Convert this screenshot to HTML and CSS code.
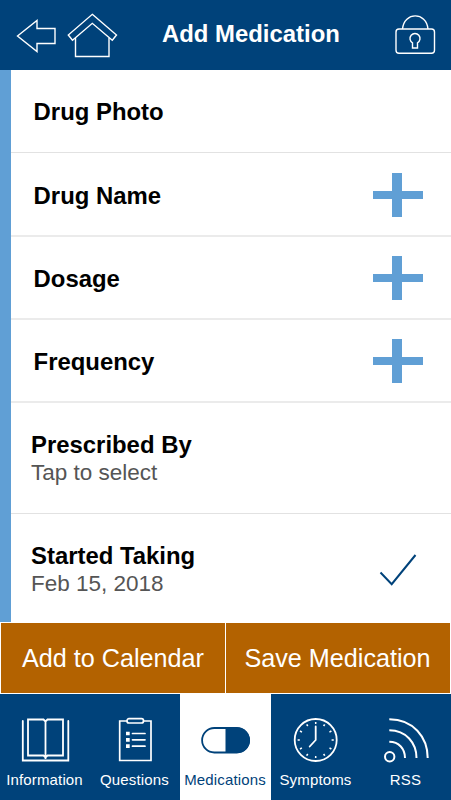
FILE: index.html
```
<!DOCTYPE html>
<html lang="en">
<head>
<meta charset="utf-8">
<title>Add Medication</title>
<link rel="stylesheet" href="styles.css">
</head>
<body>
<div class="app">
  <header class="header">
    <svg class="nav-icons" width="110" height="50" viewBox="14 10 110 50" fill="none" stroke="#fff" stroke-width="1.4">
      <path d="M17.5 36 37 20.5V28.500H55V43.500H37V51.500Z"/>
      <path d="M92.300 14.300 116.500 35 112.300 40.300 92.300 23.300 72.500 40.300 68.300 35Z"/>
      <path d="M75.500 38V56.500H109V38"/>
    </svg>
    <h1 class="title">Add Medication</h1>
    <svg class="lock" width="44" height="42" viewBox="393 13 44 42" fill="none" stroke="#fff" stroke-width="1.4">
      <rect x="396" y="29" width="38.500" height="24.300" rx="3"/>
      <path d="M402.500 29C404 11.500 426.500 11.500 428 29"/>
      <path d="M412.500 42.800A5 5 0 1 1 417.500 42.800V48H412.500Z"/>
    </svg>
  </header>
  <main class="list">
    <section class="row thin"><h2>Drug Photo</h2></section>
    <section class="row"><h2>Drug Name</h2><i class="plus"></i></section>
    <section class="row"><h2>Dosage</h2><i class="plus"></i></section>
    <section class="row"><h2>Frequency</h2><i class="plus"></i></section>
    <section class="row tall"><div><h2>Prescribed By</h2><p>Tap to select</p></div></section>
    <section class="row tall last"><div><h2>Started Taking</h2><p>Feb 15, 2018</p></div>
      <svg class="check" width="38" height="36" viewBox="379 551 38 36" fill="none" stroke="#00427a" stroke-width="2"><path d="M380.500 572.500 391.700 584.200 415.500 555"/></svg>
    </section>
  </main>
  <div class="actions"><button>Add to Calendar</button><button class="save">Save Medication</button></div>
  <nav class="tabs">
    <a class="tab">
      <svg width="50" height="48" viewBox="0 0 50 48" fill="none" stroke="#fff" stroke-width="1.800">
        <path d="M2.800 4V43.500H48.300V4" stroke-linecap="round"/>
        <path d="M25.500 4.500 23.500 2.500H8V38.500H23.500L25.500 40.500 27.500 38.500H43V2.500H27.500ZM25.500 4.500V42"/>
      </svg><span>Information</span>
    </a>
    <a class="tab">
      <svg width="50" height="48" viewBox="0 0 50 48" fill="none" stroke="#fff" stroke-width="1.700">
        <path d="M17 4H9.700V43.500H41V4H33"/><rect x="17" y="1.700" width="16.500" height="4.300" rx="2"/>
        <path d="M22.500 16.500H35M22.500 22.800H35M22.500 29.200H35" stroke-linecap="round"/>
        <path d="M16 16.500H19.700M16 22.800H19.700M16 29.200H19.700" stroke-width="3.700"/>
      </svg><span>Questions</span>
    </a>
    <a class="tab active">
      <svg width="50" height="48" viewBox="0 0 50 48" fill="#00427a">
        <rect x="1.100" y="11" width="47" height="24.500" rx="12.250" fill="#fff" stroke="#00427a" stroke-width="1.800"/><path d="M24.500 10.500H36.200A12.750 12.750 0 0 1 36.200 36H24.500Z"/>
      </svg><span>Medications</span>
    </a>
    <a class="tab">
      <svg width="50" height="48" viewBox="0 0 50 48" fill="none" stroke="#fff" stroke-width="1.800">
        <circle cx="24.700" cy="23" r="21"/>
        <path d="M24.700 9.500V23L18.700 29.500" stroke-linecap="round"/>
        <circle cx="24.700" cy="23" r="17" pathLength="120" stroke-width="2.200" stroke-dasharray="1.800 8.200" stroke-dashoffset=".9"/>
      </svg><span>Symptoms</span>
    </a>
    <a class="tab">
      <svg width="50" height="48" viewBox="0 0 50 48" fill="none" stroke="#fff" stroke-width="2">
        <circle cx="8.700" cy="39.700" r="4.700"/>
        <path d="M8.300 24.700C18 24.700 24 32 24 41M8.300 13.300C25 13.300 35.500 26 35.500 41M8.300 2.200C32 2.200 46.700 20 46.700 41"/>
      </svg><span>RSS</span>
    </a>
  </nav>
</div>
</body>
</html>
```
FILE: styles.css
```
* { box-sizing: border-box; }
body { margin: 0; font-family: "Liberation Sans", Arial, sans-serif; background: #fff; }
h1, h2, p { margin: 0; }
.app { width: 451px; height: 800px; display: flex; flex-direction: column; overflow: hidden; }
.header { height: 70px; background: #00427a; display: flex; align-items: flex-start; padding: 10px 14px; }
.nav-icons { margin-right: 38px; flex: none; }
.title { color: #fff; font-size: 23.9px; line-height: 28px; margin-top: 10px; width: 180px; white-space: nowrap; }
.lock { margin: 3px 0 0 51px; flex: none; }
.list { height: 552px; border-left: 11px solid #609fd5; display: flex; flex-direction: column; }
.row { height: 83px; flex: none; display: flex; align-items: center; justify-content: space-between; padding: 2px 28px 0 22.6px; border-bottom: 2px solid #ebebeb; }
.thin { padding-bottom: 1px; border-bottom: 1px solid #e2e2e2; }
.thin + .row { height: 84px; padding-top: 3px; }
h2 { font-size: 23.9px; line-height: 28px; color: #000; white-space: nowrap; }
.plus { width: 50px; height: 44px; margin-top: -2px; background: linear-gradient(#609fd5, #609fd5) 19px 0 / 10px 44px no-repeat, linear-gradient(#609fd5, #609fd5) 0 18px / 50px 8px no-repeat; }
.tall { height: 111px; padding: 2px 34px 1px 20px; border-bottom: 1px solid #e2e2e2; }
.last { height: 108px; padding-bottom: 0; border: 0; }
p { font-size: 22.5px; line-height: 27px; color: #555; }
.actions { height: 72px; padding: 1px; display: grid; grid-template-columns: 224px 224px; gap: 1px; }
button { border: 0; padding: 0; background: #b36200; color: #fff; font: 25.2px "Liberation Sans", Arial, sans-serif; white-space: nowrap; }
.save { padding-right: 1px; }
.tabs { height: 106px; display: grid; grid-template-columns: 90px 90px 91px 90px 90px; background: #00427a; }
.tab { display: flex; flex-direction: column; align-items: center; padding-top: 23px; color: #fff; font-size: 15px; line-height: 18px; letter-spacing: .15px; }
.tab span { margin: 6px 1px 0 0; }
.tab svg { flex: none; }
.active { background: #fff; color: #00427a; }
```
